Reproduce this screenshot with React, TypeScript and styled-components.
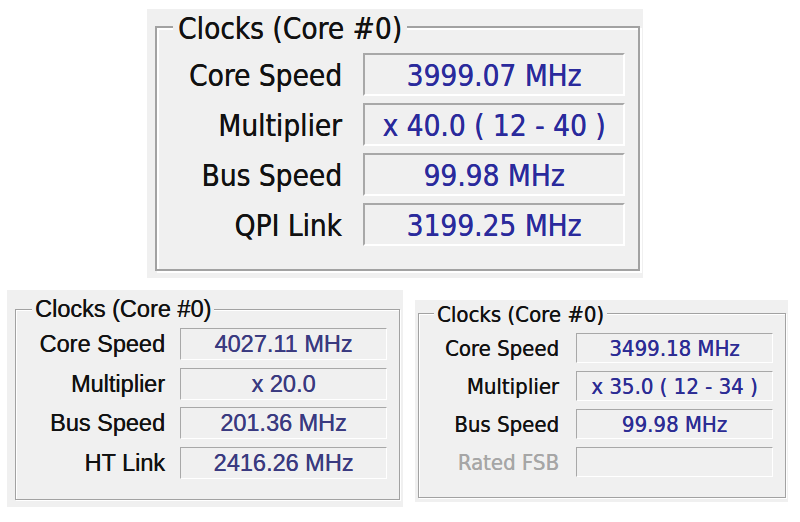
import React from "react";
import styled, { createGlobalStyle } from "styled-components";

const GlobalStyle = createGlobalStyle`
  html, body { margin: 0; padding: 0; background: #ffffff; }
  body { width: 800px; height: 522px; overflow: hidden; }
`;

type Cfg = {
  font: string;
  size: number;
  w: number;
  h: number;
  pad: [number, number, number, number];
  bw: number;
  legendH: number;
  legendDrop: number;
  legendML: number;
  legendPX: number;
  gt: number;
  gr: number;
  gb: number;
  fieldW: number;
  fieldH: number;
  rowGap: number;
  colGap: number;
  nudge: number;
  value: string;
  mt: number;
};

const TAHOMA = `"DejaVu Sans Condensed", "DejaVu Sans", Verdana, sans-serif`;
const ARIAL = `"Liberation Sans", Arial, sans-serif`;

const Page = styled.div`
  display: flex;
  flex-direction: column;
`;

const TopRow = styled.div`
  display: flex;
  padding: 9px 0 0 147px;
`;

const BottomRow = styled.div`
  display: flex;
  align-items: flex-start;
  gap: 12px;
  margin-top: 12px;
  padding-left: 7px;
`;

const Panel = styled.div<{ $c: Cfg }>`
  box-sizing: border-box;
  width: ${(p) => p.$c.w}px;
  height: ${(p) => p.$c.h}px;
  margin-top: ${(p) => p.$c.mt}px;
  padding: ${(p) => p.$c.pad.map((v) => v + "px").join(" ")};
  background: #f0f0f0;
  font-family: ${(p) => p.$c.font};
  font-size: ${(p) => p.$c.size}px;
  text-shadow: 0.25px 0 0 currentColor;
`;

const Group = styled.fieldset<{ $c: Cfg }>`
  margin: 0;
  min-width: 0;
  padding: ${(p) => `${p.$c.gt}px ${p.$c.gr}px ${p.$c.gb}px 0`};
  border: ${(p) => p.$c.bw}px solid #a2a2a2;
  box-shadow: inset ${(p) => `${p.$c.bw}px ${p.$c.bw}px`} 0 #ffffff,
    ${(p) => `${p.$c.bw}px ${p.$c.bw}px`} 0 #ffffff;
`;

const Title = styled.legend<{ $c: Cfg }>`
  margin-left: ${(p) => p.$c.legendML}px;
  padding: 0 ${(p) => p.$c.legendPX}px;
  height: ${(p) => p.$c.legendH}px;
  line-height: ${(p) => p.$c.legendH + 2 * p.$c.legendDrop}px;
  background: #f0f0f0;
  color: #111111;
  white-space: nowrap;
`;

const Rows = styled.div<{ $c: Cfg }>`
  display: grid;
  grid-template-columns: 1fr ${(p) => p.$c.fieldW}px;
  grid-auto-rows: ${(p) => p.$c.fieldH}px;
  column-gap: ${(p) => p.$c.colGap}px;
  row-gap: ${(p) => p.$c.rowGap}px;
`;

const Label = styled.div<{ $c: Cfg; $disabled?: boolean }>`
  box-sizing: border-box;
  display: flex;
  align-items: center;
  justify-content: flex-end;
  padding-top: ${(p) => p.$c.nudge}px;
  white-space: nowrap;
  color: ${(p) => (p.$disabled ? "#a6a6a6" : "#111111")};
`;

const Field = styled.div<{ $c: Cfg }>`
  box-sizing: border-box;
  display: flex;
  align-items: center;
  justify-content: center;
  padding-top: ${(p) => p.$c.nudge}px;
  white-space: nowrap;
  background: #f0f0f0;
  border-style: solid;
  border-width: ${(p) => p.$c.bw}px;
  border-color: #a8a8a8 #ffffff #ffffff #a8a8a8;
  color: ${(p) => p.$c.value};
`;

type Row = { label: string; value: string; disabled?: boolean };

const ClockPanel = ({ c, rows }: { c: Cfg; rows: Row[] }) => (
  <Panel $c={c}>
    <Group $c={c}>
      <Title $c={c}>Clocks (Core #0)</Title>
      <Rows $c={c}>
        {rows.map((r) => (
          <React.Fragment key={r.label}>
            <Label $c={c} $disabled={r.disabled}>
              {r.label}
            </Label>
            <Field $c={c}>{r.value}</Field>
          </React.Fragment>
        ))}
      </Rows>
    </Group>
  </Panel>
);

const big: Cfg = {
  font: TAHOMA,
  size: 29.5,
  w: 496,
  h: 269,
  pad: [1, 3, 0, 8],
  bw: 2,
  legendH: 34,
  legendDrop: 2,
  legendML: 16,
  legendPX: 5,
  gt: 9,
  gr: 13,
  gb: 23,
  fieldW: 262,
  fieldH: 43,
  rowGap: 7,
  colGap: 21,
  nudge: 3,
  value: "#2a2a9c",
  mt: 0,
};

const left: Cfg = {
  font: ARIAL,
  size: 23.5,
  w: 396,
  h: 217,
  pad: [6, 3, 0, 8],
  bw: 1,
  legendH: 26,
  legendDrop: 0,
  legendML: 16,
  legendPX: 3,
  gt: 6,
  gr: 12,
  gb: 20,
  fieldW: 207,
  fieldH: 32,
  rowGap: 7.67,
  colGap: 15,
  nudge: 1,
  value: "#3a3a80",
  mt: 0,
};

const right: Cfg = {
  font: TAHOMA,
  size: 22,
  w: 373,
  h: 202,
  pad: [1, 2, 0, 3],
  bw: 1,
  legendH: 24,
  legendDrop: 2,
  legendML: 15,
  legendPX: 3,
  gt: 8,
  gr: 12,
  gb: 20,
  fieldW: 197,
  fieldH: 30,
  rowGap: 8,
  colGap: 17,
  nudge: 1,
  value: "#2c2c94",
  mt: 10,
};

export default function App() {
  return (
    <Page>
      <GlobalStyle />
      <TopRow>
        <ClockPanel
          c={big}
          rows={[
            { label: "Core Speed", value: "3999.07 MHz" },
            { label: "Multiplier", value: "x 40.0 ( 12 - 40 )" },
            { label: "Bus Speed", value: "99.98 MHz" },
            { label: "QPI Link", value: "3199.25 MHz" },
          ]}
        />
      </TopRow>
      <BottomRow>
        <ClockPanel
          c={left}
          rows={[
            { label: "Core Speed", value: "4027.11 MHz" },
            { label: "Multiplier", value: "x 20.0" },
            { label: "Bus Speed", value: "201.36 MHz" },
            { label: "HT Link", value: "2416.26 MHz" },
          ]}
        />
        <ClockPanel
          c={right}
          rows={[
            { label: "Core Speed", value: "3499.18 MHz" },
            { label: "Multiplier", value: "x 35.0 ( 12 - 34 )" },
            { label: "Bus Speed", value: "99.98 MHz" },
            { label: "Rated FSB", value: "", disabled: true },
          ]}
        />
      </BottomRow>
    </Page>
  );
}
